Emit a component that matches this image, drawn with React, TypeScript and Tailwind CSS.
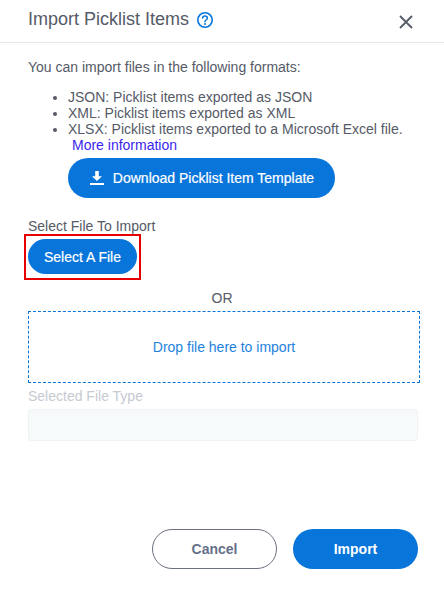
import React from "react";

export default function App() {
  return (
    <div className="w-[444px] h-[591px] bg-white overflow-hidden flex flex-col text-[14px] leading-[16px] text-[#555a66] font-['Liberation_Sans',Arial,sans-serif]">
      <header className="h-[43px] shrink-0 border-b border-[#e6e8eb] flex items-start pl-[28px] pr-[31px]">
        <h1 className="text-[18px] leading-[20px] mt-[9px] font-normal text-[#555a66]">Import Picklist Items</h1>
        <svg className="ml-[7px] mt-[11px]" width="18" height="18" viewBox="0 0 18 18" fill="none" aria-hidden="true">
          <circle cx="9" cy="9" r="7.2" stroke="#0875db" strokeWidth="1.6" />
          <path d="M6.7 7.1c0-1.3 1-2.1 2.3-2.1s2.3.8 2.3 2c0 1-.6 1.5-1.3 2-.6.4-1 .8-1 1.5v.3" stroke="#0875db" strokeWidth="1.5" strokeLinecap="round" fill="none" />
          <circle cx="9" cy="13" r="1" fill="#0875db" />
        </svg>
        <svg className="ml-auto mt-[15px]" width="14" height="14" viewBox="0 0 14 14" aria-hidden="true">
          <path d="M1 1l12 12M13 1L1 13" stroke="#555a66" strokeWidth="1.8" fill="none" />
        </svg>
      </header>

      <main className="px-[28px] flex-1 flex flex-col">
        <p className="mt-[16px]">You can import files in the following formats:</p>
        <ul className="mt-[14px] list-disc pl-[40px] w-[400px] marker:text-[#555a66]">
          <li>JSON: Picklist items exported as JSON</li>
          <li>XML: Picklist items exported as XML</li>
          <li>XLSX: Picklist items exported to a Microsoft Excel file.</li>
        </ul>
        <a className="ml-[44px] text-[#3b1ff0]" href="#">More information</a>
        <button className="mt-[5px] ml-[40px] w-[267px] h-[40px] rounded-full bg-[#0875db] text-white flex items-center justify-center gap-[8px]">
          <svg width="16" height="16" viewBox="0 0 16 16" aria-hidden="true">
            <path d="M6.2 1h3.6v5.2H13L8 11 3 6.2h3.2z" fill="#fff" />
            <rect x="1" y="13" width="14" height="2" fill="#fff" />
          </svg>
          <span className="[-webkit-text-stroke:0.2px_white]">Download Picklist Item Template</span>
        </button>

        <p className="mt-[20px]">Select File To Import</p>
        <div className="-ml-[4px] w-[117px] h-[46px] border-2 border-[#e80000] p-[2px] flex items-stretch">
          <button className="w-full mt-[1px] mb-[2px] rounded-full bg-[#0875db] text-white [-webkit-text-stroke:0.2px_white]">Select A File</button>
        </div>
        <p className="mt-[10px] text-center w-[388px]">OR</p>
        <div className="mt-[5px] w-[392px] h-[72px] border border-dashed border-[#0875db] flex items-center justify-center text-[#1e82dc]">
          Drop file here to import
        </div>
        <p className="mt-[5px] text-[#c6cad3]">Selected File Type</p>
        <div className="mt-[5px] w-[390px] h-[32px] rounded-[3px] bg-[#f7fafb] border border-[#f0f2f4]" />

        <div className="mt-[88px] flex justify-end w-[390px] gap-[16px] font-bold">
          <button className="w-[125px] h-[40px] rounded-full border border-[#6b7080] text-[#66708a]">Cancel</button>
          <button className="w-[125px] h-[40px] rounded-full bg-[#0875db] text-white">Import</button>
        </div>
      </main>
    </div>
  );
}
